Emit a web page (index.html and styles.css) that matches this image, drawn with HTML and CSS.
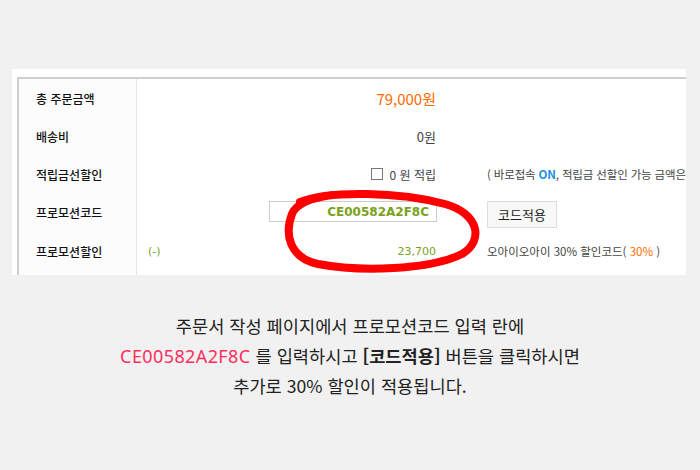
FILE: index.html
```html
<!DOCTYPE html>
<html lang="ko">
<head>
<meta charset="utf-8">
<title>프로모션코드 안내</title>
<link rel="stylesheet" href="styles.css">
</head>
<body>
<div class="page">
  <div class="panel">
    <div class="order-table">
      <div class="cell label">총 주문금액</div>
      <div class="cell value"><span class="total">79,000원</span></div>
      <div class="cell extra"></div>

      <div class="cell label">배송비</div>
      <div class="cell value"><span class="ship">0원</span></div>
      <div class="cell extra"></div>

      <div class="cell label">적립금선할인</div>
      <div class="cell value"><span class="check"></span><span class="point">0 원 적립</span></div>
      <div class="cell extra note"><span class="tight">( 바로접속 <b class="on">ON</b>, 적립금 선할인 가능 금액은</span></div>

      <div class="cell label">프로모션코드</div>
      <div class="cell value top"><input class="code-input" type="text" value="CE00582A2F8C" readonly></div>
      <div class="cell extra top"><button class="apply" type="button">코드적용</button></div>

      <div class="cell label last">프로모션할인</div>
      <div class="cell value split last"><span class="green">(-)</span><span class="green">23,700</span></div>
      <div class="cell extra note last"><span>오아이오아이 30% 할인코드( <span class="orange">30%</span> )</span></div>
    </div>
  </div>
  <div class="guide">
    <p>주문서 작성 페이지에서 프로모션코드 입력 란에</p>
    <p><span class="code">CE00582A2F8C</span> 를 입력하시고 <b>[코드적용]</b> 버튼을 클릭하시면</p>
    <p>추가로 30% 할인이 적용됩니다.</p>
  </div>
  <svg class="mark" width="700" height="470" viewBox="0 0 700 470" aria-hidden="true">
    <path d="M300 202 C330 190 400 192 445 204 C478 213 485 240 462 254 C430 270 360 272 318 264 C290 258 284 235 292 214 C296 204 310 198 332 195" fill="none" stroke="#ff0000" stroke-width="8" stroke-linecap="round" stroke-linejoin="round"/>
  </svg>
</div>
</body>
</html>
```

FILE: styles.css
```css
html, body {
  margin: 0;
  padding: 0;
  background: #f1f1f1;
}

.page {
  position: relative;
  width: 700px;
  height: 470px;
  padding-top: 69px;
  box-sizing: border-box;
  font-family: "Noto Sans CJK KR", "Noto Sans", sans-serif;
  color: #222;
}

.panel {
  width: 674px;
  height: 206px;
  margin-left: 12px;
  background: #fff;
  padding: 8px 0 0 5px;
  box-sizing: border-box;
  overflow: hidden;
}

.order-table {
  height: 100%;
  border-top: 2px solid #cfcfcf;
  border-left: 2px solid #cfcfcf;
  display: grid;
  grid-template-columns: 118px 300px 1fr;
  grid-template-rows: repeat(4, 38px) 1fr;
  font-size: 12px;
}

.cell {
  display: flex;
  align-items: center;
  white-space: nowrap;
  box-sizing: border-box;
}

.cell.last {
  padding-bottom: 6px;
}

.label {
  background: #fcfcfc;
  border-right: 1px solid #e4e4e4;
  padding-left: 17px;
  color: #111;
  font-weight: 500;
}

.value {
  justify-content: flex-end;
  padding-right: 1px;
}

.value.top {
  padding-right: 0;
}

.top {
  align-items: flex-start;
  padding-top: 8px;
}

.extra {
  padding-left: 50px;
}

.total {
  color: #ff6a00;
  font-size: 15px;
}

.ship {
  color: #444;
  font-size: 13px;
}

.check {
  width: 12px;
  height: 12px;
  border: 1px solid #777;
  box-sizing: border-box;
  margin-right: 6px;
}

.point {
  color: #444;
}

.note {
  color: #444;
  font-size: 11.5px;
}

.tight {
  letter-spacing: -0.15px;
}

.on {
  color: #1a8fe3;
  font-weight: 700;
}

.code-input {
  width: 168px;
  height: 21px;
  box-sizing: border-box;
  border: 1px solid #cccccc;
  padding: 0 7px;
  margin: 0;
  text-align: right;
  font-family: "DejaVu Sans", sans-serif;
  font-weight: 700;
  font-size: 12px;
  color: #79a21c;
  background: #fff;
  outline: none;
}

.apply {
  width: 70px;
  height: 27px;
  box-sizing: border-box;
  border: 1px solid #dddddd;
  background: #f8f8f8;
  font-family: "Noto Sans CJK KR", sans-serif;
  font-size: 13px;
  color: #222;
  padding: 0;
  margin: 0;
}

.split {
  justify-content: space-between;
  padding-left: 11px;
}

.green {
  color: #79a21c;
  font-family: "DejaVu Sans", sans-serif;
  font-size: 11px;
}

.orange {
  color: #ff6a00;
}

.guide {
  margin-top: 36px;
  text-align: center;
  font-size: 17.6px;
  line-height: 30px;
  color: #222;
}

.guide p {
  margin: 0;
}

.guide b {
  font-weight: 700;
}

.code {
  color: #ff2d5e;
  font-family: "Noto Sans", sans-serif;
  font-size: 18px;
  letter-spacing: 0.4px;
}

.mark {
  position: absolute;
  left: 0;
  top: 0;
  pointer-events: none;
}
```
